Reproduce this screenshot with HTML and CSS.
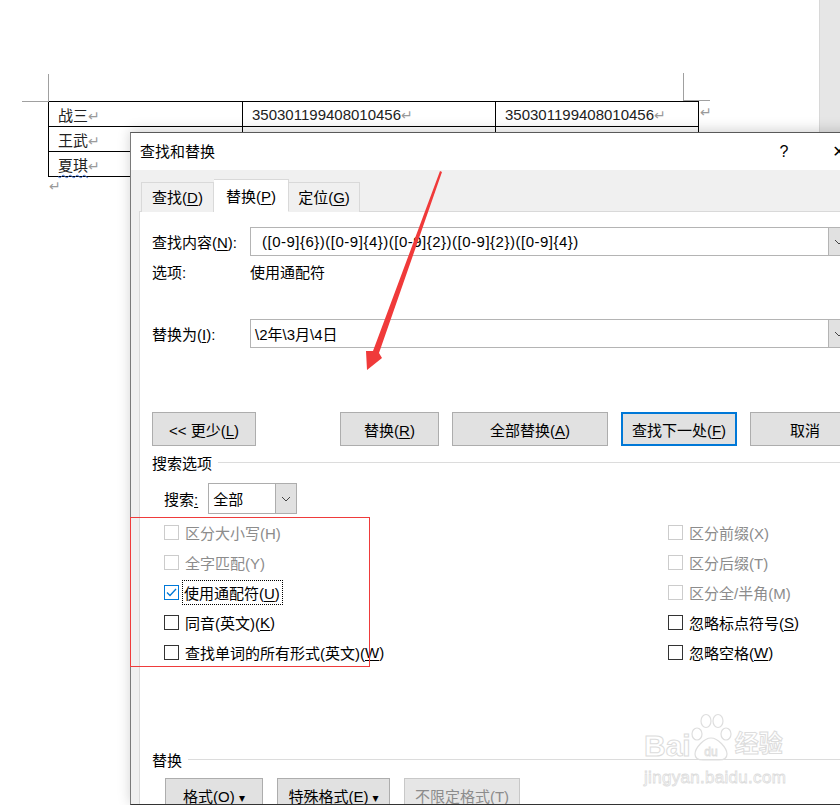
FILE: index.html
```html
<!DOCTYPE html>
<html lang="zh-CN">

<head>
    <meta charset="UTF-8">
    <meta name="viewport" content="width=device-width, initial-scale=1.0">
    <title>查找和替换</title>
    <link rel="stylesheet" href="styles.css">
</head>

<body>
    <div class="doc">
        <div class="page">
            <div class="table-wrap">
                <span class="mark mark-left"></span>
                <span class="mark mark-right"></span>
                <table class="doc-table">
                    <tr>
                        <td class="c1">战三<span class="pm">↵</span></td>
                        <td class="c2">350301199408010456<span class="pm">↵</span></td>
                        <td class="c3">350301199408010456<span class="pm">↵</span></td>
                    </tr>
                    <tr>
                        <td>王武<span class="pm">↵</span></td>
                        <td></td>
                        <td></td>
                    </tr>
                    <tr>
                        <td><span class="wavy">夏琪</span><span class="pm">↵</span></td>
                        <td></td>
                        <td></td>
                    </tr>
                </table>
                <span class="pm row-end">↵</span>
            </div>
            <p class="pm after-table">↵</p>
        </div>
        <div class="gutter"></div>
    </div>

    <div class="dialog">
        <div class="titlebar">
            <span class="title">查找和替换</span>
            <span class="help">?</span>
            <span class="close">✕</span>
        </div>
        <div class="dialog-body">
            <div class="tabs">
                <div class="tab">查找(<u>D</u>)</div>
                <div class="tab active">替换(<u>P</u>)</div>
                <div class="tab">定位(<u>G</u>)</div>
            </div>
            <div class="panel">
                <div class="field-row">
                    <label class="field-label">查找内容(<u>N</u>):</label>
                    <div class="combo">
                        <span class="combo-text pattern">([0-9]{6})([0-9]{4})([0-9]{2})([0-9]{2})([0-9]{4})</span>
                        <span class="combo-btn">
                            <svg width="10" height="6" viewBox="0 0 10 6"><path d="M1 1l4 4 4-4" fill="none" stroke="#444" stroke-width="1"/></svg>
                        </span>
                    </div>
                </div>
                <div class="option-row">
                    <span class="field-label">选项:</span>
                    <span>使用通配符</span>
                </div>
                <div class="field-row replace-row">
                    <label class="field-label">替换为(<u>I</u>):</label>
                    <div class="combo">
                        <span class="combo-text">\2年\3月\4日</span>
                        <span class="combo-btn">
                            <svg width="10" height="6" viewBox="0 0 10 6"><path d="M1 1l4 4 4-4" fill="none" stroke="#444" stroke-width="1"/></svg>
                        </span>
                    </div>
                </div>

                <div class="button-row">
                    <button class="btn btn-less">&lt;&lt; 更少(<u>L</u>)</button>
                    <button class="btn btn-replace">替换(<u>R</u>)</button>
                    <button class="btn btn-all">全部替换(<u>A</u>)</button>
                    <button class="btn btn-next">查找下一处(<u>F</u>)</button>
                    <button class="btn btn-cancel">取消</button>
                </div>

                <div class="group-title">搜索选项</div>

                <div class="search-row">
                    <span>搜索<u>:</u></span>
                    <div class="select">
                        <span class="select-text">全部</span>
                        <span class="select-btn">
                            <svg width="10" height="6" viewBox="0 0 10 6"><path d="M1 1l4 4 4-4" fill="none" stroke="#444" stroke-width="1"/></svg>
                        </span>
                    </div>
                </div>

                <div class="checks">
                    <div class="check disabled"><span class="box"></span>区分大小写(H)</div>
                    <div class="check disabled"><span class="box"></span>区分前缀(X)</div>
                    <div class="check disabled"><span class="box"></span>全字匹配(Y)</div>
                    <div class="check disabled"><span class="box"></span>区分后缀(T)</div>
                    <div class="check checked">
                        <span class="box">
                            <svg width="13" height="13" viewBox="0 0 13 13"><path d="M2 6.5l3 3 6-6.5" fill="none" stroke="#0078d7" stroke-width="1.3"/></svg>
                        </span>
                        <span class="focus">使用通配符(<u>U</u>)</span>
                    </div>
                    <div class="check disabled"><span class="box"></span>区分全/半角(M)</div>
                    <div class="check"><span class="box"></span>同音(英文)(<u>K</u>)</div>
                    <div class="check"><span class="box"></span>忽略标点符号(<u>S</u>)</div>
                    <div class="check"><span class="box"></span>查找单词的所有形式(英文)(<u>W</u>)</div>
                    <div class="check"><span class="box"></span>忽略空格(<u>W</u>)</div>
                </div>

                <div class="group-title replace-title">替换</div>

                <div class="format-row">
                    <button class="btn btn-format">格式(<u>O</u>) <span class="caret">▾</span></button>
                    <button class="btn btn-special">特殊格式(<u>E</u>) <span class="caret">▾</span></button>
                    <button class="btn btn-nolimit" disabled>不限定格式(T)</button>
                </div>
            </div>
        </div>
    </div>

    <!-- annotations drawn on top of the screenshot -->
    <svg class="annot" width="840" height="805" viewBox="0 0 840 805">
        <rect x="130.5" y="517.5" width="239" height="149" fill="none" stroke="#ef3b3b" stroke-width="1"/>
        <polygon points="440,171 442,172 379,353 382,358 367,370 366,351 373,351" fill="#f03a3a"/>
    </svg>

    <div class="watermark">
        <div class="wm-top">
            <span class="wm-bai">Bai</span>
            <svg class="wm-paw" width="44" height="50" viewBox="0 0 44 50">
                <g fill="none" stroke="#dedede" stroke-width="1.2">
                    <ellipse cx="8" cy="22" rx="5" ry="6"/>
                    <ellipse cx="17" cy="9" rx="5" ry="6.5"/>
                    <ellipse cx="29" cy="9" rx="5" ry="6.5"/>
                    <ellipse cx="37" cy="22" rx="5" ry="6"/>
                    <path d="M22 26c-7 0-16 10-16 16 0 5 5 6 8 6h16c3 0 8-1 8-6 0-6-9-16-16-16z"/>
                </g>
                <text x="22" y="44" text-anchor="middle" font-family="Liberation Sans, sans-serif" font-size="12" fill="none" stroke="#dedede" stroke-width="0.8">du</text>
            </svg>
            <span class="wm-jy">经验</span>
        </div>
        <div class="wm-url">jingyan.baidu.com</div>
    </div>
</body>

</html>
```

FILE: styles.css
```css
body {
    margin: 0;
    width: 840px;
    height: 805px;
    overflow: hidden;
    position: relative;
    background: #fff;
    font-family: "Liberation Sans", "Noto Sans CJK SC", sans-serif;
    color: #000;
}

u {
    text-decoration: underline;
    text-underline-offset: 2px;
}

.doc {
    display: flex;
    height: 805px;
}

.page {
    width: 820px;
    background: #fff;
}

.gutter {
    width: 20px;
    background: #e6e6e6;
    border-left: 1px solid #d8d8d8;
}

.table-wrap {
    position: relative;
    margin: 101px 0 0 48px;
    width: 670px;
}

.mark {
    position: absolute;
    width: 26px;
    height: 27px;
    border-color: #a0a0a0;
    border-style: solid;
    border-width: 0;
}

.mark-left {
    left: -26px;
    top: -27px;
    border-right-width: 1px;
    border-bottom-width: 1px;
}

.mark-right {
    left: 635px;
    top: -28px;
    border-left-width: 1px;
    border-bottom-width: 1px;
}

.doc-table {
    border-collapse: collapse;
    font-size: 15px;
    color: #222;
}

.doc-table td {
    border: 1px solid #000;
    height: 25px;
    padding: 0 0 0 9px;
    vertical-align: middle;
    box-sizing: border-box;
}

.doc-table .c1 { width: 194px; }
.doc-table .c2 { width: 253px; }
.doc-table .c3 { width: 203px; }

.pm {
    color: #9a9a9a;
    font-size: 14px;
    font-family: "DejaVu Sans", sans-serif;
}

.row-end {
    position: absolute;
    left: 652px;
    top: 3px;
}

.after-table {
    margin: 1px 0 0 49px;
}

.wavy {
    text-decoration: underline wavy #3b6fd6;
    text-decoration-thickness: 1px;
    text-underline-offset: 3px;
}

/* dialog */
.dialog {
    position: absolute;
    left: 130px;
    top: 132px;
    width: 740px;
    height: 671px;
    border-top: 1px solid #595959;
    border-left: 1px solid #7a7a7a;
    border-bottom: 1px solid #333;
    background: #f0f0f0;
    box-shadow: 0 -2px 12px rgba(0, 0, 0, 0.18);
    font-size: 15px;
    overflow: hidden;
}

.titlebar {
    height: 37px;
    background: #fff;
    display: flex;
    align-items: center;
    padding-left: 9px;
}

.title {
    flex: 1;
    margin-top: -2px;
}

.help {
    width: 46px;
    text-align: center;
    font-size: 16px;
}

.close {
    width: 64px;
    text-align: center;
    font-size: 16px;
    font-family: "DejaVu Sans", sans-serif;
}

.dialog-body {
    padding: 10px 0 0 8px;
}

.tabs {
    display: flex;
    align-items: flex-end;
    padding-left: 2px;
    height: 32px;
    position: relative;
    z-index: 1;
    margin-bottom: -1px;
}

.tab {
    height: 29px;
    line-height: 29px;
    border: 1px solid #d9d9d9;
    border-bottom: none;
    background: #f0f0f0;
    text-align: center;
    box-sizing: content-box;
}

.tab:nth-child(1) { width: 71px; }
.tab:nth-child(3) { width: 70px; border-left: none; }

.tab.active {
    width: 74px;
    height: 31px;
    line-height: 33px;
    background: #fff;
    border-left: none;
    border-bottom: 1px solid #fff;
}

.panel {
    background: #fff;
    border: 1px solid #d9d9d9;
    border-right: none;
    padding: 15px 0 0 12px;
    height: 700px;
}

.field-row {
    display: flex;
    align-items: center;
    height: 29px;
}

.field-label {
    width: 98px;
    flex-shrink: 0;
}

.combo {
    width: 598px;
    height: 27px;
    border: 1px solid #b4b4b4;
    display: flex;
    align-items: center;
}

.combo-text {
    flex: 1;
    padding-left: 4px;
}

.combo-text.pattern {
    padding-left: 11px;
    font-size: 15px;
    letter-spacing: 0.5px;
}

.combo-btn {
    width: 20px;
    height: 27px;
    background: #e1e1e1;
    border-left: 1px solid #b4b4b4;
    display: flex;
    align-items: center;
    justify-content: center;
}

.option-row {
    display: flex;
    align-items: center;
    height: 20px;
    margin-top: 5px;
}

.replace-row {
    margin-top: 38px;
}

.button-row {
    display: flex;
    margin-top: 64px;
}

.btn {
    height: 34px;
    background: #e1e1e1;
    border: 1px solid #adadad;
    font-family: inherit;
    font-size: 15px;
    color: #000;
    padding: 0;
    box-sizing: border-box;
}

.btn-less { width: 104px; }
.btn-replace { width: 99px; margin-left: 84px; }
.btn-all { width: 156px; margin-left: 13px; }
.btn-next { width: 116px; margin-left: 13px; border: 2px solid #0078d7; }
.btn-cancel { width: 110px; margin-left: 13px; }

.group-title {
    display: flex;
    align-items: center;
    height: 20px;
    margin-top: 6px;
}

.group-title::after {
    content: "";
    flex: 1;
    height: 1px;
    background: #dcdcdc;
    margin-left: 6px;
}

.search-row {
    display: flex;
    align-items: center;
    margin: 11px 0 0 12px;
    gap: 10px;
}

.select {
    width: 87px;
    height: 29px;
    border: 1px solid #adadad;
    display: flex;
    align-items: center;
}

.select-text {
    flex: 1;
    padding-left: 4px;
}

.select-btn {
    width: 20px;
    height: 29px;
    background: #e1e1e1;
    border-left: 1px solid #adadad;
    display: flex;
    align-items: center;
    justify-content: center;
}

.checks {
    display: grid;
    grid-template-columns: 504px 1fr;
    grid-auto-rows: 30px;
    margin: 3px 0 0 12px;
}

.check {
    display: flex;
    align-items: center;
    white-space: nowrap;
}

.box {
    width: 13px;
    height: 13px;
    border: 1px solid #333;
    margin-right: 6px;
    display: flex;
    align-items: center;
    justify-content: center;
    flex-shrink: 0;
}

.check.disabled {
    color: #8c8c8c;
}

.check.disabled .box {
    border-color: #cccccc;
}

.check.checked .box {
    border-color: #0078d7;
}

.focus {
    outline: 1px dotted #000;
    padding: 1px 2px 1px 1px;
    margin-left: -2px;
}

.replace-title {
    margin-top: 82px;
}

.format-row {
    display: flex;
    margin: 9px 0 0 13px;
}

.btn-format { width: 98px; }
.btn-special { width: 113px; margin-left: 14px; }
.btn-nolimit { width: 116px; margin-left: 14px; color: #8c8c8c; border-color: #c8c8c8; background: #e6e6e6; }

.caret {
    font-size: 12px;
    font-family: "DejaVu Sans", sans-serif;
}

/* overlays */
.annot {
    position: absolute;
    left: 0;
    top: 0;
    pointer-events: none;
}

.watermark {
    position: absolute;
    left: 644px;
    top: 712px;
    width: 152px;
    pointer-events: none;
}

.wm-top {
    display: flex;
    align-items: flex-end;
    height: 50px;
}

.wm-bai,
.wm-jy {
    font-size: 30px;
    font-weight: bold;
    line-height: 32px;
    color: #fff;
    -webkit-text-stroke: 1px #dcdcdc;
    font-family: "Liberation Sans", "Noto Sans CJK SC", sans-serif;
}

.wm-jy {
    font-size: 24px;
    margin-left: 2px;
    margin-bottom: 2px;
}

.wm-paw {
    margin-left: -2px;
}

.wm-url {
    font-size: 17px;
    color: #fff;
    -webkit-text-stroke: 0.8px #dcdcdc;
    margin-top: 6px;
    letter-spacing: 0.3px;
}
```
